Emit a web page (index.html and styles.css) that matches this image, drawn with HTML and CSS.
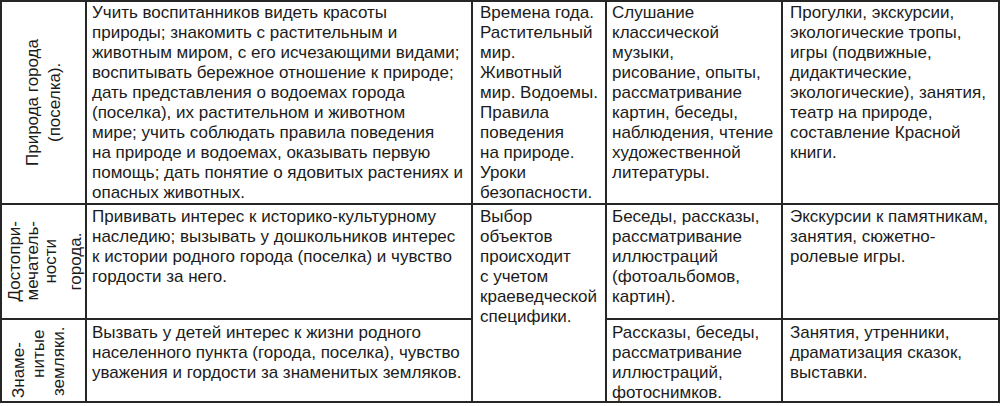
FILE: index.html
```html
<!DOCTYPE html>
<html lang="ru">
<head>
<meta charset="utf-8">
<title>Таблица</title>
<link rel="stylesheet" href="styles.css">
</head>
<body>
<table class="grid">
  <colgroup>
    <col class="c1"><col class="c2"><col class="c3"><col class="c4"><col class="c5">
  </colgroup>
  <tr class="r1">
    <td class="side"><div class="rot rot1">Природа города<br>(поселка).</div></td>
    <td><div class="cell">Учить воспитанников видеть красоты<br>природы; знакомить с растительным и<br>животным миром, с его исчезающими видами;<br>воспитывать бережное отношение к природе;<br>дать представления о водоемах города<br>(поселка), их растительном и животном<br>мире; учить соблюдать правила поведения<br>на природе и водоемах, оказывать первую<br>помощь; дать понятие о ядовитых растениях и<br>опасных животных.</div></td>
    <td><div class="cell pad">Времена года.<br>Растительный<br>мир.<br>Животный<br>мир. Водоемы.<br>Правила<br>поведения<br>на природе.<br>Уроки<br>безопасности.</div></td>
    <td><div class="cell">Слушание<br>классической<br>музыки,<br>рисование, опыты,<br>рассматривание<br>картин, беседы,<br>наблюдения, чтение<br>художественной<br>литературы.</div></td>
    <td><div class="cell pad">Прогулки, экскурсии,<br>экологические тропы,<br>игры (подвижные,<br>дидактические,<br>экологические), занятия,<br>театр на природе,<br>составление Красной<br>книги.</div></td>
  </tr>
  <tr class="r2">
    <td class="side"><div class="rot rot2">Достопри-<br>мечатель-<br>ности<br><span class="wide">города.</span></div></td>
    <td><div class="cell">Прививать интерес к историко-культурному<br>наследию; вызывать у дошкольников интерес<br>к истории родного города (поселка) и чувство<br>гордости за него.</div></td>
    <td class="span" rowspan="2"><div class="cell pad free">Выбор<br>объектов<br>происходит<br>с учетом<br>краеведческой<br>специфики.</div></td>
    <td><div class="cell">Беседы, рассказы,<br>рассматривание<br>иллюстраций<br>(фотоальбомов,<br>картин).</div></td>
    <td><div class="cell pad">Экскурсии к памятникам,<br>занятия, сюжетно-<br>ролевые игры.</div></td>
  </tr>
  <tr class="r3">
    <td class="side"><div class="rot rot3"><span class="ln ln-start">Знаме-</span><span class="ln ln-mid">нитые</span><span class="ln">земляки.</span></div></td>
    <td><div class="cell">Вызвать у детей интерес к жизни родного<br>населенного пункта (города, поселка), чувство<br>уважения и гордости за знаменитых земляков.</div></td>
    <td><div class="cell">Рассказы, беседы,<br>рассматривание<br>иллюстраций,<br>фотоснимков.</div></td>
    <td><div class="cell pad">Занятия, утренники,<br>драматизация сказок,<br>выставки.</div></td>
  </tr>
</table>
</body>
</html>
```

FILE: styles.css
```css
html, body {
  margin: 0;
  padding: 0;
  background: #ffffff;
}

body {
  font-family: "Liberation Sans", Arial, sans-serif;
  font-size: 17px;
  line-height: 20px;
  color: #1b1b1b;
}

.grid {
  border-collapse: collapse;
  table-layout: fixed;
  width: 998px;
  margin: 0;
}

.c1 { width: 85px; }
.c2 { width: 386px; }
.c3 { width: 134px; }
.c4 { width: 176px; }
.c5 { width: 217px; }

.grid td {
  border: 2px solid #262626;
  vertical-align: top;
  padding: 0;
  white-space: nowrap;
  overflow: visible;
}

.cell {
  box-sizing: border-box;
  padding: 1px 3px 0 5px;
  overflow: visible;
}

.cell.pad {
  padding-left: 7px;
}

.r1 .cell { height: 201px; }
.r2 .cell { height: 113px; padding-top: 2px; }
.r3 .cell { height: 81px; padding-top: 3px; }
.r2 .cell.free { height: auto; }

.grid td.side {
  vertical-align: middle;
  text-align: center;
}

.rot {
  writing-mode: vertical-rl;
  transform: rotate(180deg);
  margin: 0 auto;
  text-align: center;
}

.rot1 {
  line-height: 22px;
}

.rot2 {
  line-height: 18px;
  margin-left: 4px;
}

.rot2 .wide {
  line-height: 32px;
}

.rot3 {
  line-height: 20px;
  height: 74px;
  margin-left: 7px;
}

.rot3 .ln {
  display: block;
  text-align: center;
}

.rot3 .ln-start {
  text-align: start;
}

.rot3 .ln-mid {
  box-sizing: border-box;
  padding-top: 14px;
}
```
